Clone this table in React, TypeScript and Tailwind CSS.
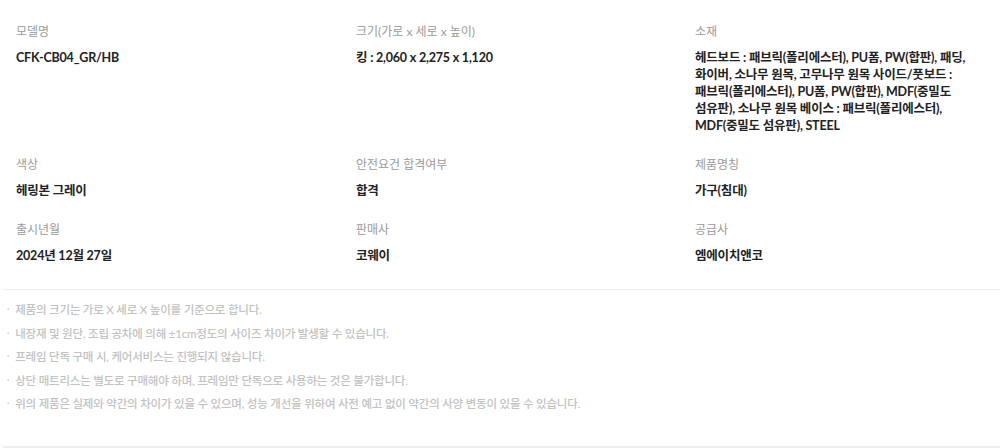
import React from "react";

const SPECS: { label: string; value: React.ReactNode }[] = [
  { label: "모델명", value: "CFK-CB04_GR/HB" },
  { label: "크기(가로 x 세로 x 높이)", value: "킹 : 2,060 x 2,275 x 1,120" },
  {
    label: "소재",
    value: (
      <>
        헤드보드 : 패브릭(폴리에스터), PU폼, PW(합판), 패딩,
        <br />
        화이버, 소나무 원목, 고무나무 원목 사이드/풋보드 : 패브릭(폴리에스터), PU폼, PW(합판), MDF(중밀도 섬유판), 소나무 원목 베이스 :
        패브릭(폴리에스터), MDF(중밀도 섬유판), STEEL
      </>
    ),
  },
  { label: "색상", value: "헤링본 그레이" },
  { label: "안전요건 합격여부", value: "합격" },
  { label: "제품명칭", value: "가구(침대)" },
  { label: "출시년월", value: "2024년 12월 27일" },
  { label: "판매사", value: "코웨이" },
  { label: "공급사", value: "엠에이치앤코" },
];

const NOTES = [
  "제품의 크기는 가로 X 세로 X 높이를 기준으로 합니다.",
  "내장재 및 원단, 조립 공차에 의해 ±1cm정도의 사이즈 차이가 발생할 수 있습니다.",
  "프레임 단독 구매 시, 케어서비스는 진행되지 않습니다.",
  "상단 매트리스는 별도로 구매해야 하며, 프레임만 단독으로 사용하는 것은 불가합니다.",
  "위의 제품은 실제와 약간의 차이가 있을 수 있으며, 성능 개선을 위하여 사전 예고 없이 약간의 사양 변동이 있을 수 있습니다.",
];

export default function App() {
  return (
    <div
      className="w-[1000px] h-[448px] bg-white overflow-hidden flex flex-col"
      style={{ fontFamily: "Lato, 'Noto Sans CJK KR', sans-serif" }}
    >
      <div className="grid grid-cols-[340px_339px_272px] gap-y-[22px] pl-4 pt-[23px] pb-[25px]">
        {SPECS.map((s) => (
          <div key={s.label} className="flex flex-col">
            <span className="text-[12px] leading-[18px] text-[#9a9a9a]">{s.label}</span>
            <span className="mt-[8px] text-[12.5px] leading-[17px] font-bold text-[#222] tracking-[-0.2px] break-keep">
              {s.value}
            </span>
          </div>
        ))}
      </div>
      <div className="ml-[3px] h-px bg-[#eeeeee]" />
      <ul className="pl-[7px] pt-[8px]">
        {NOTES.map((n) => (
          <li
            key={n}
            className="flex items-center gap-[6px] text-[11.5px] leading-[23.5px] text-[#c2c2c2] font-medium tracking-[-0.2px]"
          >
            <span className="text-[9px] -translate-y-px">·</span>
            <span>{n}</span>
          </li>
        ))}
      </ul>
      <div className="mt-auto ml-[3px] h-[2px] bg-[#eeeeee]" />
    </div>
  );
}
